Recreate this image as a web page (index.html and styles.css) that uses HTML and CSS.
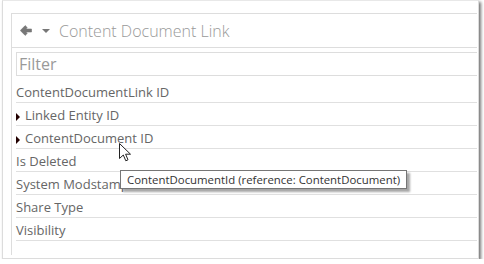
FILE: index.html
```html
<!DOCTYPE html>
<html lang="en">
<head>
    <meta charset="utf-8" />
    <title>Content Document Link</title>
    <link rel="stylesheet" href="styles.css">
</head>
<body>
    <div class="window">
        <div class="panel">
            <header class="panel-head">
                <svg class="icon-back" width="12" height="11" viewBox="0 0 12 11"><path d="M0.3 5.5 L5.2 0.6 L7.3 2.7 L5.8 4 L11.5 4 L11.5 7 L5.8 7 L7.3 8.3 L5.2 10.4 Z" fill="#777" stroke="#777" stroke-width="0.6" stroke-linejoin="round"/></svg>
                <span class="caret"></span>
                <h1>Content Document Link</h1>
            </header>
            <input class="filter" placeholder="Filter" />
            <ul class="fields">
                <li>ContentDocumentLink ID</li>
                <li class="expand">Linked Entity ID</li>
                <li class="expand">ContentDocument ID</li>
                <li>Is Deleted</li>
                <li>System Modstamp</li>
                <li>Share Type</li>
                <li>Visibility</li>
            </ul>
        </div>
        <svg class="cursor" width="13" height="19" viewBox="0 0 13 19"><path d="M0.5 0.5 L0.5 15.5 L4.3 12 L6.8 17.8 L9 16.8 L6.6 11.2 L11.5 11.2 Z" fill="#fff" stroke="#222" stroke-width="1" stroke-linejoin="round"/></svg>
        <div class="tooltip">ContentDocumentId (reference: ContentDocument)</div>
    </div>
</body>
</html>
```
FILE: styles.css
```css
html, body {
    margin: 0;
    background: #fff;
}
body {
    font-family: "Open Sans", sans-serif;
}
.window {
    position: relative;
    margin-left: 2px;
    width: 477px;
    height: 259px;
    border: 1px solid #dcdcdc;
    border-top-color: #e8e8e8;
    box-shadow: 2px 2px 3px rgba(0, 0, 0, 0.55);
    background: #fff;
    padding: 12px 0 0 8px;
    box-sizing: border-box;
}
.panel {
    width: 466px;
    height: 242px;
    border-top: 1px solid #ddd;
    border-left: 1px solid #ddd;
    padding-left: 4px;
    box-sizing: border-box;
}
.panel-head {
    display: flex;
    align-items: center;
    height: 33px;
    margin-left: -4px;
    padding-left: 8px;
    border-bottom: 1px solid #ddd;
}
.icon-back {
    display: block;
}
.caret {
    width: 0;
    height: 0;
    border-left: 4px solid transparent;
    border-right: 4px solid transparent;
    border-top: 4.5px solid #777;
    margin-left: 10px;
    margin-top: 1px;
}
h1 {
    margin: 0 0 0 9px;
    font-size: 16px;
    font-weight: 300;
    color: #999;
}
.filter {
    display: block;
    margin: 4px 0 0 0;
    width: 461px;
    height: 24px;
    box-sizing: border-box;
    border: 1px solid #ddd;
    border-right: none;
    padding: 0 2px;
    font-family: "Open Sans", sans-serif;
    font-size: 16px;
    color: #999;
    outline: none;
}
.filter::placeholder {
    color: #999;
}
.fields {
    list-style: none;
    margin: 4px 0 0 0;
    padding: 0;
    width: 461px;
}
.fields li {
    height: 21px;
    padding-top: 1px;
    line-height: 22px;
    border-bottom: 1px solid #e0e0e0;
    font-size: 13px;
    color: #666;
    white-space: nowrap;
}
.fields .expand::before {
    content: "";
    display: inline-block;
    width: 0;
    height: 0;
    border-top: 4px solid transparent;
    border-bottom: 4px solid transparent;
    border-left: 4.5px solid #200;
    margin-right: 5px;
    vertical-align: -0.5px;
}
.cursor {
    position: absolute;
    left: 116px;
    top: 142px;
}
.tooltip {
    position: absolute;
    left: 117px;
    top: 169px;
    height: 17px;
    padding: 0 6px;
    border: 1px solid #767676;
    background: #fff;
    color: #333;
    font-family: "Open Sans", sans-serif;
    font-size: 11.4px;
    line-height: 17px;
    box-shadow: 3px 3px 2px rgba(0, 0, 0, 0.35);
    white-space: nowrap;
}
```
